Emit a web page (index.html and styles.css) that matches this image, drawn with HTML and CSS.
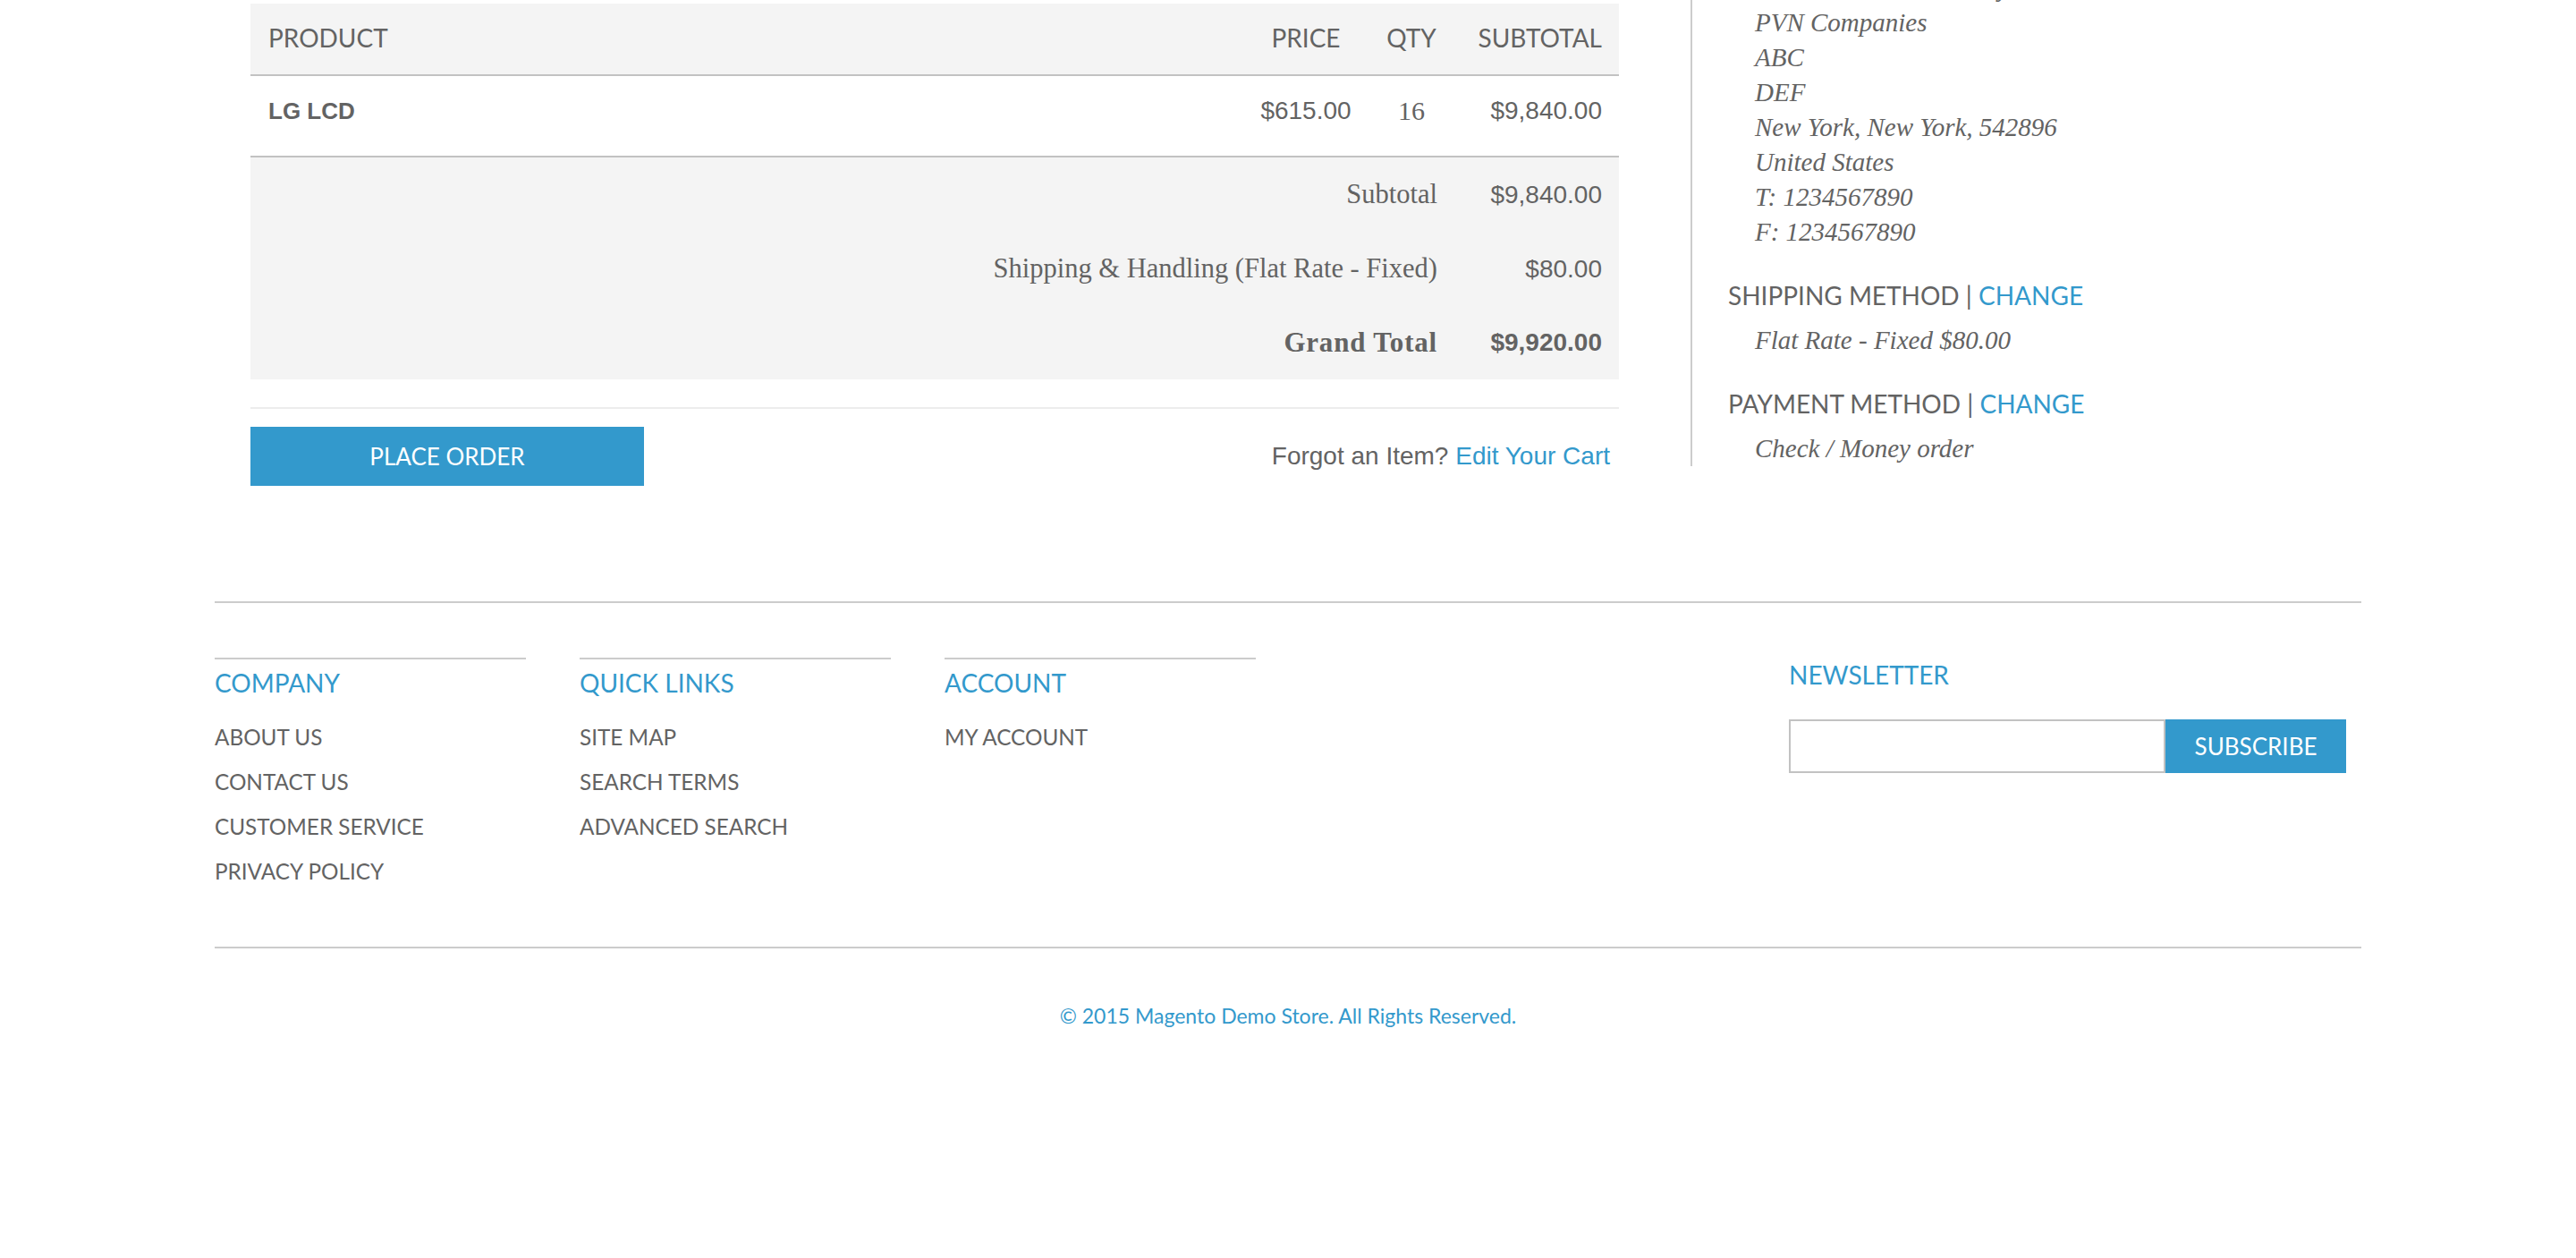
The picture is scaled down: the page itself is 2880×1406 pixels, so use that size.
FILE: index.html
```html
<!DOCTYPE html>
<html lang="en">
<head>
<meta charset="utf-8">
<title>Checkout - Order Review</title>
<link rel="stylesheet" href="styles.css">
</head>
<body>
<div class="page">
  <div class="main">
    <div class="col-left">
      <table class="review">
        <colgroup>
          <col class="c-name">
          <col class="c-price">
          <col class="c-qty">
          <col class="c-sub">
        </colgroup>
        <thead>
          <tr>
            <th class="th-name">PRODUCT</th>
            <th class="th-center">PRICE</th>
            <th class="th-center">QTY</th>
            <th class="th-right">SUBTOTAL</th>
          </tr>
        </thead>
        <tbody>
          <tr class="item">
            <td class="td-name">LG LCD</td>
            <td class="td-price">$615.00</td>
            <td class="td-qty">16</td>
            <td class="td-sub">$9,840.00</td>
          </tr>
        </tbody>
        <tfoot>
          <tr class="tot">
            <td class="tot-label" colspan="3">Subtotal</td>
            <td class="tot-value">$9,840.00</td>
          </tr>
          <tr class="tot">
            <td class="tot-label" colspan="3">Shipping &amp; Handling (Flat Rate - Fixed)</td>
            <td class="tot-value">$80.00</td>
          </tr>
          <tr class="tot grand">
            <td class="tot-label" colspan="3">Grand Total</td>
            <td class="tot-value">$9,920.00</td>
          </tr>
        </tfoot>
      </table>
      <div class="actions">
        <button class="btn btn-place" type="button">PLACE ORDER</button>
        <p class="forgot">Forgot an Item? <a href="#" class="link">Edit Your Cart</a></p>
      </div>
    </div>
    <aside class="col-right">
      <address class="addr">
        <span class="addr-line">Ashish Vinodbhai Pandya</span>
        <span class="addr-line">PVN Companies</span>
        <span class="addr-line">ABC</span>
        <span class="addr-line">DEF</span>
        <span class="addr-line">New York, New York, 542896</span>
        <span class="addr-line">United States</span>
        <span class="addr-line">T: 1234567890</span>
        <span class="addr-line">F: 1234567890</span>
      </address>
      <h4 class="sec-title">SHIPPING METHOD <span class="sep">|</span> <a href="#" class="link">CHANGE</a></h4>
      <p class="sec-body">Flat Rate - Fixed $80.00</p>
      <h4 class="sec-title">PAYMENT METHOD <span class="sep">|</span> <a href="#" class="link">CHANGE</a></h4>
      <p class="sec-body">Check / Money order</p>
    </aside>
  </div>

  <footer class="footer">
    <div class="footer-cols">
      <div class="fcol">
        <h5 class="fcol-title">COMPANY</h5>
        <ul class="flinks">
          <li><a href="#">ABOUT US</a></li>
          <li><a href="#">CONTACT US</a></li>
          <li><a href="#">CUSTOMER SERVICE</a></li>
          <li><a href="#">PRIVACY POLICY</a></li>
        </ul>
      </div>
      <div class="fcol">
        <h5 class="fcol-title">QUICK LINKS</h5>
        <ul class="flinks">
          <li><a href="#">SITE MAP</a></li>
          <li><a href="#">SEARCH TERMS</a></li>
          <li><a href="#">ADVANCED SEARCH</a></li>
        </ul>
      </div>
      <div class="fcol">
        <h5 class="fcol-title">ACCOUNT</h5>
        <ul class="flinks">
          <li><a href="#">MY ACCOUNT</a></li>
        </ul>
      </div>
      <div class="newsletter">
        <h5 class="news-title">NEWSLETTER</h5>
        <form class="news-form" onsubmit="return false;">
          <input class="news-input" type="email" aria-label="Email">
          <button class="btn btn-sub" type="submit">SUBSCRIBE</button>
        </form>
      </div>
    </div>
    <div class="footer-bottom">
      <p class="copyright">© 2015 Magento Demo Store. All Rights Reserved.</p>
    </div>
  </footer>
</div>
</body>
</html>
```
FILE: styles.css
```css
* { box-sizing: border-box; }

html, body {
  margin: 0;
  padding: 0;
  background: #ffffff;
}

body {
  font-family: "Liberation Sans", Arial, sans-serif;
  font-size: 28px;
  color: #636363;
}

a { text-decoration: none; }
.link { color: #3399cc; }

.page {
  width: 2400px;
  margin: 0 auto;
}

/* ---------- main area ---------- */
.main {
  display: flex;
  align-items: flex-start;
}

.col-left {
  width: 1570px;
  flex: 0 0 1570px;
  padding: 4px 0 0 40px;
}

.col-right {
  flex: 1 1 auto;
  margin-left: 80px;
  border-left: 2px solid #cccccc;
  padding-left: 40px;
}

/* ---------- review table ---------- */
.review {
  width: 1530px;
  table-layout: fixed;
  border-collapse: separate;
  border-spacing: 0;
}

.c-price { width: 140px; }
.c-qty { width: 96px; }
.c-sub { width: 184px; }

.review th {
  background: #f4f4f4;
  font-family: Lato, "Open Sans", sans-serif;
  font-weight: 400;
  font-size: 28px;
  line-height: 77px;
  padding: 0 0 2px;
  border-bottom: 2px solid #c2c2c2;
  color: #636363;
}

.th-name { text-align: left; padding-left: 20px !important; }
.th-center { text-align: center; }
.th-right { text-align: right; padding-right: 19px !important; }

.item td {
  vertical-align: top;
  padding: 20px 0 31px;
  line-height: 38px;
  border-bottom: 2px solid #c2c2c2;
  background: #ffffff;
}

.td-name {
  font-weight: 700;
  font-size: 26px;
  padding-left: 20px !important;
}

.td-price { text-align: center; }

.td-qty {
  text-align: center;
  font-family: "Liberation Serif", "Times New Roman", serif;
  font-size: 30px;
}

.td-sub { text-align: right; padding-right: 19px !important; }

.tot td {
  background: #f4f4f4;
  line-height: 83px;
  padding: 0;
  vertical-align: middle;
}

.tot:last-child td { line-height: 82px; }

.tot-label {
  text-align: right;
  font-family: "Liberation Serif", Georgia, serif;
  font-size: 30.5px;
  padding-right: 19px !important;
}

.tot-value {
  text-align: right;
  padding-right: 19px !important;
}

.grand .tot-label {
  font-weight: 700;
  font-size: 31px;
  letter-spacing: 0.8px;
}

.grand .tot-value { font-weight: 700; }

/* ---------- actions ---------- */
.actions {
  margin-top: 31px;
  border-top: 2px solid #ededed;
  padding-top: 20px;
  display: flex;
  align-items: center;
  justify-content: space-between;
}

.btn {
  border: 0;
  margin: 0;
  background: #3399cc;
  color: #ffffff;
  font-family: Lato, "Open Sans", sans-serif;
  font-weight: 400;
  font-size: 26px;
  cursor: pointer;
  padding: 0;
}

.btn-place {
  width: 440px;
  height: 66px;
  line-height: 66px;
}

.forgot {
  margin: 0;
  padding-right: 10px;
  line-height: 66px;
}

/* ---------- right summary ---------- */
.addr {
  display: flex;
  flex-direction: column;
  margin-top: -33px;
  padding-left: 30px;
  font-family: "Liberation Serif", Georgia, serif;
  font-style: italic;
  font-size: 29px;
  line-height: 39px;
}

.sec-title {
  margin: 31px 0 0;
  font-family: Lato, "Open Sans", sans-serif;
  font-weight: 400;
  font-size: 28px;
  line-height: 40px;
  color: #636363;
}

.sep { color: #636363; }

.sec-body {
  margin: 11px 0 0;
  padding-left: 30px;
  font-family: "Liberation Serif", Georgia, serif;
  font-style: italic;
  font-size: 29px;
  line-height: 39px;
}

/* ---------- footer ---------- */
.footer {
  margin-top: 129px;
  border-top: 2px solid #cccccc;
  padding-top: 61px;
  font-family: Lato, "Open Sans", sans-serif;
}

.footer-cols {
  display: flex;
  align-items: flex-start;
}

.fcol {
  width: 348px;
  flex: 0 0 348px;
  margin-right: 60px;
  border-top: 2px solid #cccccc;
  padding-top: 6px;
}

.fcol-title,
.news-title {
  margin: 0;
  font-weight: 400;
  font-size: 28px;
  line-height: 40px;
  color: #3399cc;
}

.news-title { margin-top: -1px; }

.flinks {
  list-style: none;
  margin: 16px 0 0;
  padding: 0;
}

.flinks li {
  font-size: 24.3px;
  line-height: 50px;
}

.flinks a { color: #636363; }

.newsletter {
  margin-left: auto;
  width: 640px;
}

.news-form {
  display: flex;
  margin: 30px 0 0;
}

.news-input {
  width: 421px;
  height: 60px;
  margin: 0;
  border: 2px solid #c2c2c2;
  background: #ffffff;
  padding: 0 16px;
  font-size: 26px;
  outline: none;
}

.btn-sub {
  width: 202px;
  height: 60px;
  line-height: 60px;
}

.footer-bottom {
  margin-top: 59px;
  border-top: 2px solid #cccccc;
  padding-top: 60px;
}

.copyright {
  margin: 0;
  text-align: center;
  font-size: 23px;
  line-height: 30px;
  color: #3399cc;
}
```
